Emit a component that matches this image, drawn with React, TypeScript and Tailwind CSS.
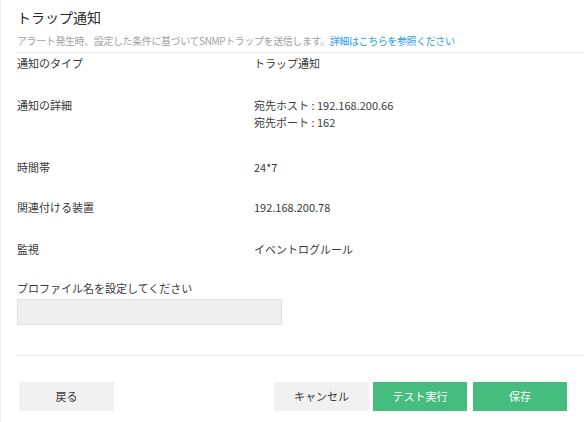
const font = { fontFamily: '"Noto Sans CJK JP", "Noto Sans", sans-serif' };

interface DetailRowProps {
  label: string;
  values: string[];
  height: string;
}

function DetailRow({ label, values, height }: DetailRowProps) {
  return (
    <div className={`flex ${height}`}>
      <div className="w-[237px] text-[11px] leading-4 text-[#3a3a3a]">{label}</div>
      <div className="flex flex-col gap-[1px] text-[11px] leading-4 text-[#3a3a3a]">
        {values.map((v) => (
          <span key={v}>{v}</span>
        ))}
      </div>
    </div>
  );
}

export default function App() {
  return (
    <div className="w-[584px] h-[422px] bg-white border-l border-[#f2f2f2] overflow-hidden" style={font}>
      <div className="pl-4 pt-[7px]">
        <h1 className="text-[14px] leading-5 text-[#2a2a2a]">トラップ通知</h1>
        <p className="mt-[6px] text-[10px] leading-4 text-[#9f9f9f] tracking-[-0.4px]">
          アラート発生時、設定した条件に基づいてSNMPトラップを送信します。
          <span className="text-[#2a9ee6]">詳細はこちらを参照ください</span>
        </p>
      </div>
      <div className="ml-4 mt-[3px] border-t border-[#ececec]" />
      <div className="pl-4 pt-[2px]">
        <DetailRow label="通知のタイプ" values={["トラップ通知"]} height="h-[42px]" />
        <DetailRow
          label="通知の詳細"
          values={["宛先ホスト : 192.168.200.66", "宛先ポート : 162"]}
          height="h-[62px]"
        />
        <DetailRow label="時間帯" values={["24*7"]} height="h-[40px]" />
        <DetailRow label="関連付ける装置" values={["192.168.200.78"]} height="h-[42px]" />
        <DetailRow label="監視" values={["イベントログルール"]} height="h-[39px]" />
        <div className="text-[11px] leading-4 text-[#3a3a3a]">プロファイル名を設定してください</div>
        <input
          className="mt-[3px] block w-[265px] h-[26px] bg-[#efefef] border border-[#e2e2e2] outline-none"
          defaultValue=""
        />
      </div>
      <div className="ml-4 mt-[30px] border-t border-[#ececec]" />
      <div className="flex items-center justify-between pl-[18px] pr-[17px] mt-[26px]">
        <button className="w-[95px] h-[29px] bg-[#f1f1f1] text-[11px] text-[#3a3a3a]">戻る</button>
        <div className="flex gap-[4px]">
          <button className="w-[95px] h-[29px] bg-[#f1f1f1] text-[11px] text-[#3a3a3a]">キャンセル</button>
          <button className="w-[94px] h-[29px] bg-[#45bd7f] text-[11px] text-white">テスト実行</button>
          <button className="w-[94px] h-[29px] ml-[2px] bg-[#45bd7f] text-[11px] text-white">保存</button>
        </div>
      </div>
    </div>
  );
}
